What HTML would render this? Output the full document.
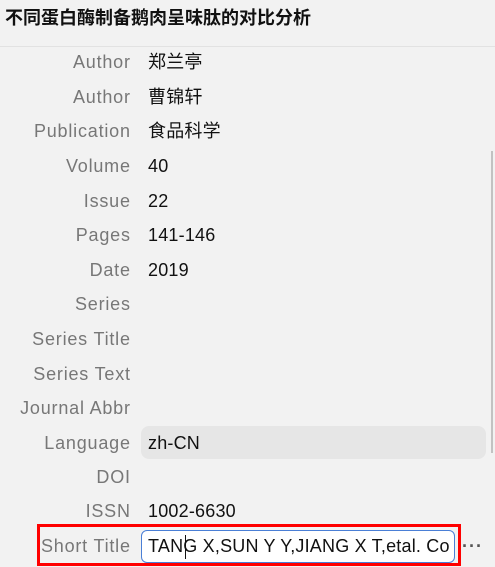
<!DOCTYPE html>
<html><head><meta charset="utf-8"><style>
html,body{margin:0;padding:0;width:495px;height:567px;overflow:hidden;background:#f2f2f2;font-family:"Liberation Sans","Noto Sans CJK SC",sans-serif;}
.title{position:absolute;left:5px;top:4px;font-size:18px;font-weight:bold;color:#111;}
.hr{position:absolute;left:0;top:46px;width:495px;height:1px;background:#e2e2e2;}
.row{position:absolute;left:0;width:495px;height:34px;font-size:18px;line-height:34px;}
.lab{position:absolute;right:365px;color:#777;white-space:nowrap;letter-spacing:0.8px;margin-right:-0.8px;}
.val{position:absolute;left:148px;color:#111;white-space:nowrap;letter-spacing:0.2px;}
.sb{position:absolute;left:491px;top:151px;width:2px;height:302px;background:#c2c2c2;}
.lang{position:absolute;left:141px;top:426px;width:345px;height:33px;background:#e6e6e6;border-radius:8px;}
.red{position:absolute;left:37px;top:524px;width:418px;height:36px;border:3px solid #f00;}
.inp{position:absolute;left:141px;top:530px;width:314px;height:33px;background:#fff;border:1px solid #4a7fd6;border-radius:6px;box-sizing:border-box;}
.cur{position:absolute;left:185px;top:535px;width:1px;height:24px;background:#111;}
</style></head><body>
<div class="title">不同蛋白酶制备鹅肉呈味肽的对比分析</div>
<div class="hr"></div>
<div class="sb"></div>
<div class="lang"></div>
<div class="red"></div>
<div class="inp"></div>
<div class="row" style="top:45px"><span class="lab">Author</span><span class="val">郑兰亭</span></div>
<div class="row" style="top:80px"><span class="lab">Author</span><span class="val">曹锦轩</span></div>
<div class="row" style="top:114px"><span class="lab">Publication</span><span class="val">食品科学</span></div>
<div class="row" style="top:149px"><span class="lab">Volume</span><span class="val">40</span></div>
<div class="row" style="top:184px"><span class="lab">Issue</span><span class="val">22</span></div>
<div class="row" style="top:218px"><span class="lab">Pages</span><span class="val">141-146</span></div>
<div class="row" style="top:253px"><span class="lab">Date</span><span class="val">2019</span></div>
<div class="row" style="top:287px"><span class="lab">Series</span></div>
<div class="row" style="top:322px"><span class="lab">Series Title</span></div>
<div class="row" style="top:357px"><span class="lab">Series Text</span></div>
<div class="row" style="top:391px"><span class="lab">Journal Abbr</span></div>
<div class="row" style="top:426px"><span class="lab">Language</span><span class="val">zh-CN</span></div>
<div class="row" style="top:460px"><span class="lab">DOI</span></div>
<div class="row" style="top:494px"><span class="lab">ISSN</span><span class="val">1002-6630</span></div>
<div class="row" style="top:529px"><span class="lab">Short Title</span><span class="val">TANG X,SUN Y Y,JIANG X T,etal. Co</span><span style="position:absolute;left:462px;color:#555;font-weight:bold;letter-spacing:1px;">···</span></div>
<div class="cur"></div>
</body></html>
